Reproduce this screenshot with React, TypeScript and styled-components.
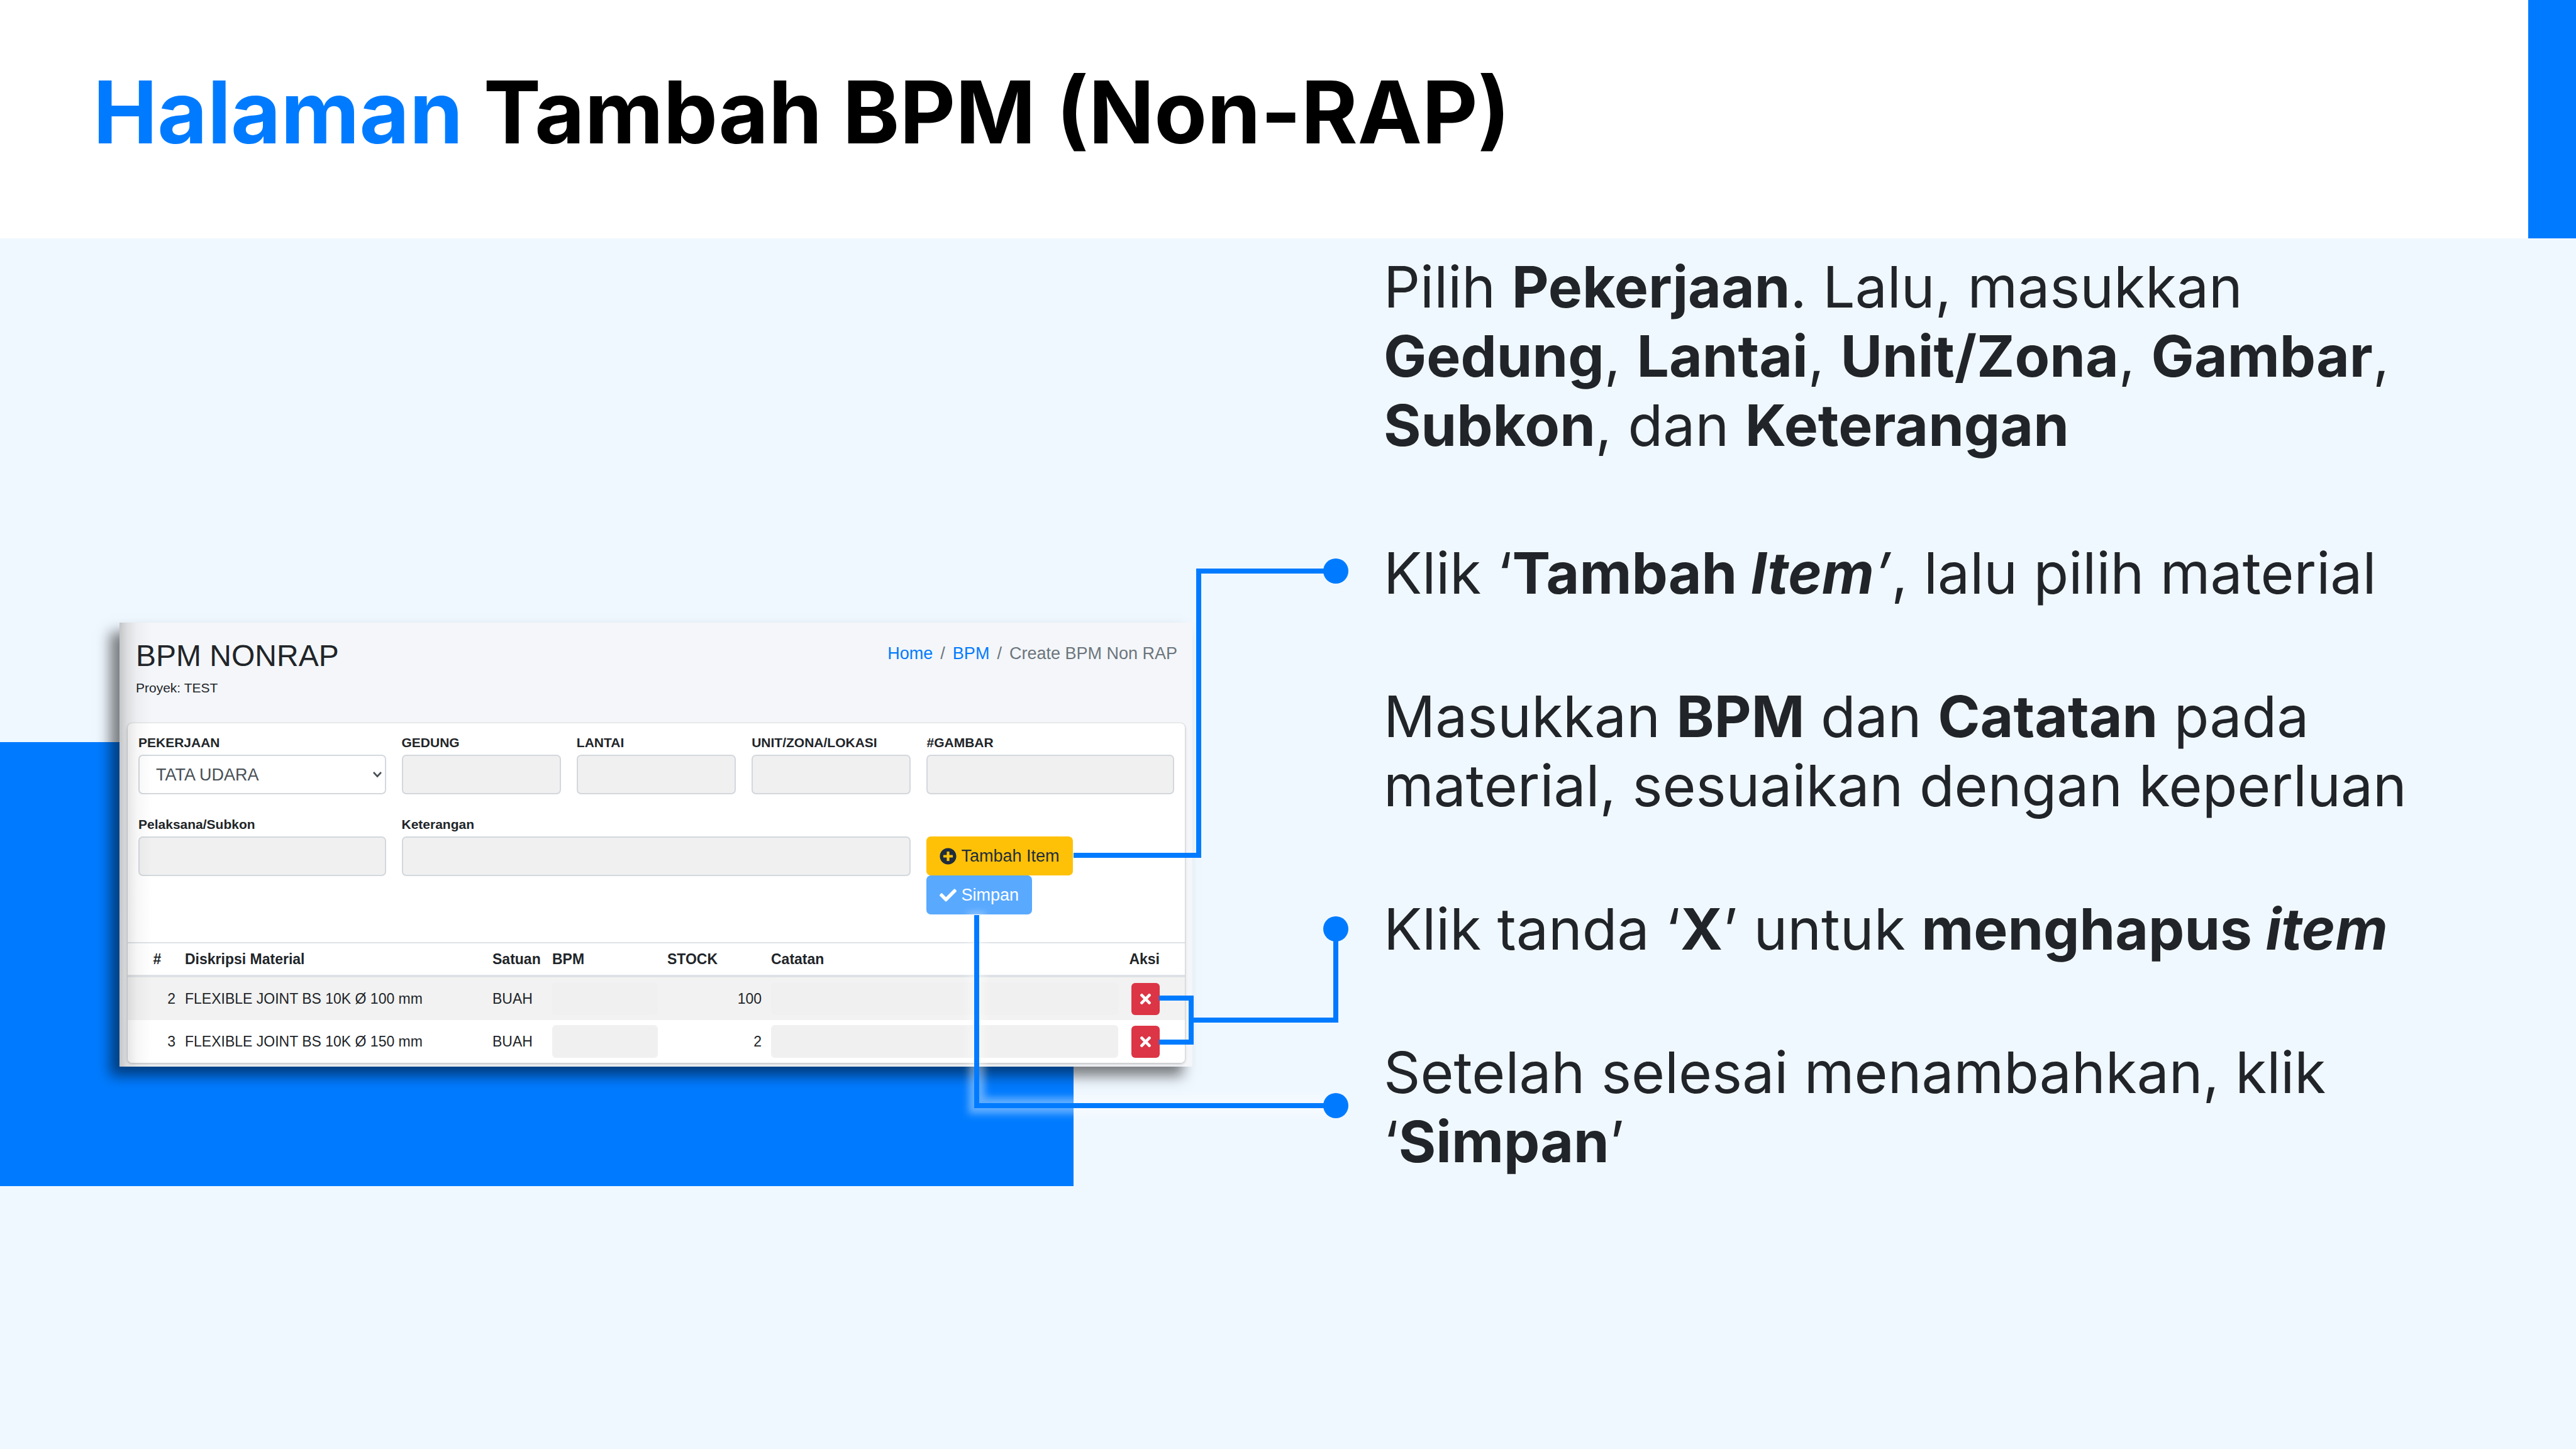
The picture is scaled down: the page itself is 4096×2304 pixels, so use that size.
import React from "react";
import styled, { createGlobalStyle, css } from "styled-components";
import { FaCheck, FaPlusCircle, FaTimes } from "react-icons/fa";

const color = {
  blue: "#007bff",
  sky: "#f0f8ff",
  ink: "#212529",
  muted: "#6c757d",
  field: "#f0f0f0",
  line: "#dee2e6",
  fieldLine: "#d3d8dd",
};

const GlobalStyle = createGlobalStyle`
  *, *::before, *::after { box-sizing: border-box; }
  body {
    margin: 0;
    background: ${color.sky};
    color: ${color.ink};
    font-family: Inter, "Liberation Sans", sans-serif;
  }
`;

const Slide = styled.div`
  display: flex;
  flex-direction: column;
  min-height: 100vh;
  overflow: hidden;
`;

const Header = styled.header`
  display: flex;
  justify-content: space-between;
  min-height: 379px;
  background: #fff;
`;

const Title = styled.h1`
  margin: 0;
  padding: 95px 0 0 148px;
  font-size: 137px;
  line-height: 166px;
  font-weight: 700;
  color: #000;
`;

const TitleAccent = styled.span`
  color: ${color.blue};
`;

const HeaderBar = styled.div`
  flex: none;
  width: 76px;
  background: ${color.blue};
`;

const Content = styled.main`
  flex: 1;
  display: grid;
  grid-template-columns: 2200fr 1896fr;
`;

const Stage = styled.section`
  position: relative;
  padding: 611px 304px 190px 190px;
`;

const Figure = styled.div`
  position: relative;
`;

const Backdrop = styled.div`
  position: absolute;
  inset: 190px 189px -190px -190px;
  background: ${color.blue};
`;

const Panel = styled.div`
  position: relative;
  padding: 0 12px 6px 13px;
  background: #f4f6f9;
  box-shadow: -15px 15px 20px rgba(0, 0, 0, 0.5);
  font-family: "Liberation Sans", Arial, sans-serif;

  &::after {
    content: "";
    position: absolute;
    inset: 0;
    pointer-events: none;
    background: linear-gradient(
      to right,
      rgba(0, 0, 0, 0.2) 0,
      rgba(0, 0, 0, 0.1) 12px,
      rgba(0, 0, 0, 0.03) 28px,
      rgba(0, 0, 0, 0) 52px
    );
  }
`;

const PanelHeader = styled.div`
  display: flex;
  justify-content: space-between;
  align-items: flex-start;
  padding: 24px 12px 40px 13px;
`;

const PanelTitle = styled.h2`
  margin: 0 0 6px;
  font-size: 48px;
  line-height: 58px;
  font-weight: 400;
`;

const Project = styled.p`
  margin: 0;
  font-size: 21px;
  line-height: 32px;
`;

const Breadcrumb = styled.nav`
  display: flex;
  gap: 12px;
  padding-top: 5px;
  font-size: 27px;
  line-height: 40px;
  color: ${color.muted};

  a {
    color: ${color.blue};
    text-decoration: none;
  }
`;

const Card = styled.div`
  overflow: hidden;
  border-radius: 7px;
  background: #fff;
  box-shadow: 0 0 2px rgba(0, 0, 0, 0.2), 0 2px 5px rgba(0, 0, 0, 0.2);
`;

const Form = styled.form`
  display: grid;
  grid-template-columns: 393fr 253fr 253fr 253fr 393fr;
  gap: 32px 25px;
  padding: 15px 17px 44px;
`;

const Field = styled.div<{ $span?: number }>`
  display: flex;
  flex-direction: column;
  gap: 3px;
  min-width: 0;
  grid-column: span ${(p) => p.$span ?? 1};
`;

const Label = styled.label`
  font-size: 21px;
  line-height: 32px;
  font-weight: 700;
`;

const control = css`
  width: 100%;
  height: 63px;
  margin: 0;
  padding: 0 26px;
  border: 2px solid ${color.fieldLine};
  border-radius: 7px;
  font: 27px "Liberation Sans", Arial, sans-serif;
  color: #495057;
`;

const Input = styled.input`
  ${control}
  background: ${color.field};
`;

const SelectBox = styled.div`
  position: relative;
`;

const Select = styled.select`
  ${control}
  display: block;
  appearance: none;
  background: #fff;
`;

const Chevron = styled.svg`
  position: absolute;
  right: 6px;
  top: 26px;
  width: 16px;
  height: 11px;
  pointer-events: none;
`;

const Actions = styled.div`
  display: flex;
  flex-direction: column;
  align-items: flex-start;
  padding-top: 35px;
`;

const Button = styled.button<{ $tone: "warning" | "primary" }>`
  display: flex;
  align-items: center;
  gap: 7px;
  height: 62px;
  padding: 0 21px;
  border: 0;
  border-radius: 7px;
  background: ${(p) => (p.$tone === "warning" ? "#ffc107" : "#59a9ff")};
  color: ${(p) => (p.$tone === "warning" ? "#1f2d3d" : "#fff")};
  font: 27px "Liberation Sans", Arial, sans-serif;
`;

const Table = styled.table`
  width: 100%;
  table-layout: fixed;
  border-collapse: separate;
  border-spacing: 0;
  font-size: 23px;
`;

const Col = styled.col<{ $share: number }>`
  width: ${(p) => (p.$share / 1681) * 100}%;
`;

type Align = "left" | "center" | "right";

const HeadCell = styled.th<{ $align?: Align }>`
  height: 56px;
  padding: 0 7px 0 8px;
  border-top: 2px solid ${color.line};
  border-bottom: 4px solid ${color.line};
  text-align: ${(p) => p.$align ?? "left"};
  white-space: nowrap;

  &:first-child { padding-left: 18px; }
  &:last-child { padding-right: 40px; }
`;

const Row = styled.tr<{ $striped?: boolean }>`
  background: ${(p) => (p.$striped ? "#f2f2f2" : "#fff")};
  & + & > td { border-top: 1px solid ${color.line}; }
`;

const Cell = styled.td<{ $align?: Align }>`
  height: 68px;
  padding: 0 7px 0 8px;
  text-align: ${(p) => p.$align ?? "left"};
  white-space: nowrap;

  &:last-child { padding-right: 40px; }
`;

const CellInput = styled.input`
  display: block;
  width: 100%;
  height: 52px;
  padding: 0 12px;
  border: 0;
  border-radius: 6px;
  background: ${color.field};
  font: 23px "Liberation Sans", Arial, sans-serif;
`;

const RemoveButton = styled.button`
  display: inline-flex;
  align-items: center;
  justify-content: center;
  width: 45px;
  height: 51px;
  padding: 0;
  border: 0;
  border-radius: 6px;
  background: #dc3545;
  color: #fff;
  font-size: 25px;
  vertical-align: middle;
`;

const Connectors = styled.svg`
  position: absolute;
  left: 0;
  top: 0;
  width: 2200px;
  height: 1500px;
  overflow: visible;
  pointer-events: none;
`;

const Guide = styled.section`
  padding: 22px 196px 0 0;
  font-size: 91px;
  line-height: 110px;
`;

const Intro = styled.p`
  margin: 0 0 125px;
`;

const Steps = styled.div`
  display: flex;
  flex-direction: column;
  gap: 118px;
`;

const Step = styled.p`
  margin: 0;
`;

const Strong = styled.b`
  font-weight: 700;
`;

const materials = [
  { no: 2, name: "FLEXIBLE JOINT BS 10K Ø 100 mm", unit: "BUAH", stock: 100 },
  { no: 3, name: "FLEXIBLE JOINT BS 10K Ø 150 mm", unit: "BUAH", stock: 2 },
];

const columnShares = [83, 489, 95, 183, 165, 567, 99];

function TextField({ id, label, span }: { id: string; label: string; span?: number }) {
  return (
    <Field $span={span}>
      <Label htmlFor={id}>{label}</Label>
      <Input id={id} type="text" />
    </Field>
  );
}

function BpmForm() {
  return (
    <Form onSubmit={(e) => e.preventDefault()}>
      <Field>
        <Label htmlFor="pekerjaan">PEKERJAAN</Label>
        <SelectBox>
          <Select id="pekerjaan" defaultValue="TATA UDARA">
            <option>TATA UDARA</option>
          </Select>
          <Chevron viewBox="0 0 16 11" aria-hidden="true">
            <path d="M2 2 L8 8.5 L14 2" fill="none" stroke="#495057" strokeWidth="2.6" />
          </Chevron>
        </SelectBox>
      </Field>
      <TextField id="gedung" label="GEDUNG" />
      <TextField id="lantai" label="LANTAI" />
      <TextField id="unit" label="UNIT/ZONA/LOKASI" />
      <TextField id="gambar" label="#GAMBAR" />
      <TextField id="subkon" label="Pelaksana/Subkon" />
      <TextField id="keterangan" label="Keterangan" span={3} />
      <Actions>
        <Button type="button" $tone="warning">
          <FaPlusCircle aria-hidden="true" />
          Tambah Item
        </Button>
        <Button type="submit" $tone="primary">
          <FaCheck aria-hidden="true" />
          Simpan
        </Button>
      </Actions>
    </Form>
  );
}

function MaterialTable() {
  return (
    <Table>
      <colgroup>
        {columnShares.map((share, i) => (
          <Col key={i} $share={share} />
        ))}
      </colgroup>
      <thead>
        <tr>
          <HeadCell $align="center">#</HeadCell>
          <HeadCell>Diskripsi Material</HeadCell>
          <HeadCell>Satuan</HeadCell>
          <HeadCell>BPM</HeadCell>
          <HeadCell>STOCK</HeadCell>
          <HeadCell>Catatan</HeadCell>
          <HeadCell $align="right">Aksi</HeadCell>
        </tr>
      </thead>
      <tbody>
        {materials.map((m, i) => (
          <Row key={m.no} $striped={i % 2 === 0}>
            <Cell $align="right">{m.no}</Cell>
            <Cell>{m.name}</Cell>
            <Cell>{m.unit}</Cell>
            <Cell>
              <CellInput type="text" aria-label={`BPM ${m.name}`} />
            </Cell>
            <Cell $align="right">{m.stock}</Cell>
            <Cell>
              <CellInput type="text" aria-label={`Catatan ${m.name}`} />
            </Cell>
            <Cell $align="right">
              <RemoveButton type="button" aria-label={`Hapus ${m.name}`}>
                <FaTimes aria-hidden="true" />
              </RemoveButton>
            </Cell>
          </Row>
        ))}
      </tbody>
    </Table>
  );
}

function ConnectorLines() {
  return (
    <Connectors viewBox="0 0 2200 1500" fill="none" aria-hidden="true">
      <defs>
        <filter id="glow" filterUnits="userSpaceOnUse" x="1480" y="1020" width="740" height="420">
          <feGaussianBlur stdDeviation="6" />
        </filter>
      </defs>
      <path
        d="M1553 1072 V1379 H2124"
        stroke="#fff"
        strokeOpacity="0.38"
        strokeWidth="26"
        filter="url(#glow)"
      />
      <g stroke={color.blue} strokeWidth="8">
        <path d="M1707 981 H1906 V529 H2124" />
        <path d="M1843 1208 H1894 V1278 H1843" />
        <path d="M1894 1243 H2124 V1098" />
        <path d="M1553 1076 V1379 H2124" />
      </g>
      <g fill={color.blue}>
        <circle cx="2124" cy="529" r="20" />
        <circle cx="2124" cy="1098" r="20" />
        <circle cx="2124" cy="1379" r="20" />
      </g>
    </Connectors>
  );
}

export default function App() {
  return (
    <>
      <GlobalStyle />
      <Slide>
        <Header>
          <Title>
            <TitleAccent>Halaman</TitleAccent> Tambah BPM (Non-RAP)
          </Title>
          <HeaderBar />
        </Header>
        <Content>
          <Stage>
            <Figure>
              <Backdrop />
              <Panel>
                <PanelHeader>
                  <div>
                    <PanelTitle>BPM NONRAP</PanelTitle>
                    <Project>Proyek: TEST</Project>
                  </div>
                  <Breadcrumb aria-label="Breadcrumb">
                    <a href="#home">Home</a>
                    <span>/</span>
                    <a href="#bpm">BPM</a>
                    <span>/</span>
                    <span>Create BPM Non RAP</span>
                  </Breadcrumb>
                </PanelHeader>
                <Card>
                  <BpmForm />
                  <MaterialTable />
                </Card>
              </Panel>
            </Figure>
            <ConnectorLines />
          </Stage>
          <Guide>
            <Intro>
              Pilih <Strong>Pekerjaan</Strong>. Lalu, masukkan <Strong>Gedung</Strong>,{" "}
              <Strong>Lantai</Strong>, <Strong>Unit/Zona</Strong>, <Strong>Gambar</Strong>,{" "}
              <Strong>Subkon</Strong>, dan <Strong>Keterangan</Strong>
            </Intro>
            <Steps>
              <Step>
                Klik ‘<Strong>Tambah <i>Item</i></Strong><i>’</i>, lalu pilih material
              </Step>
              <Step>
                Masukkan <Strong>BPM</Strong> dan <Strong>Catatan</Strong> pada material, sesuaikan
                dengan keperluan
              </Step>
              <Step>
                Klik tanda ‘<Strong>X</Strong>’ untuk <Strong>menghapus <i>item</i></Strong>
              </Step>
              <Step>
                Setelah selesai menambahkan, klik ‘<Strong>Simpan</Strong>’
              </Step>
            </Steps>
          </Guide>
        </Content>
      </Slide>
    </>
  );
}
